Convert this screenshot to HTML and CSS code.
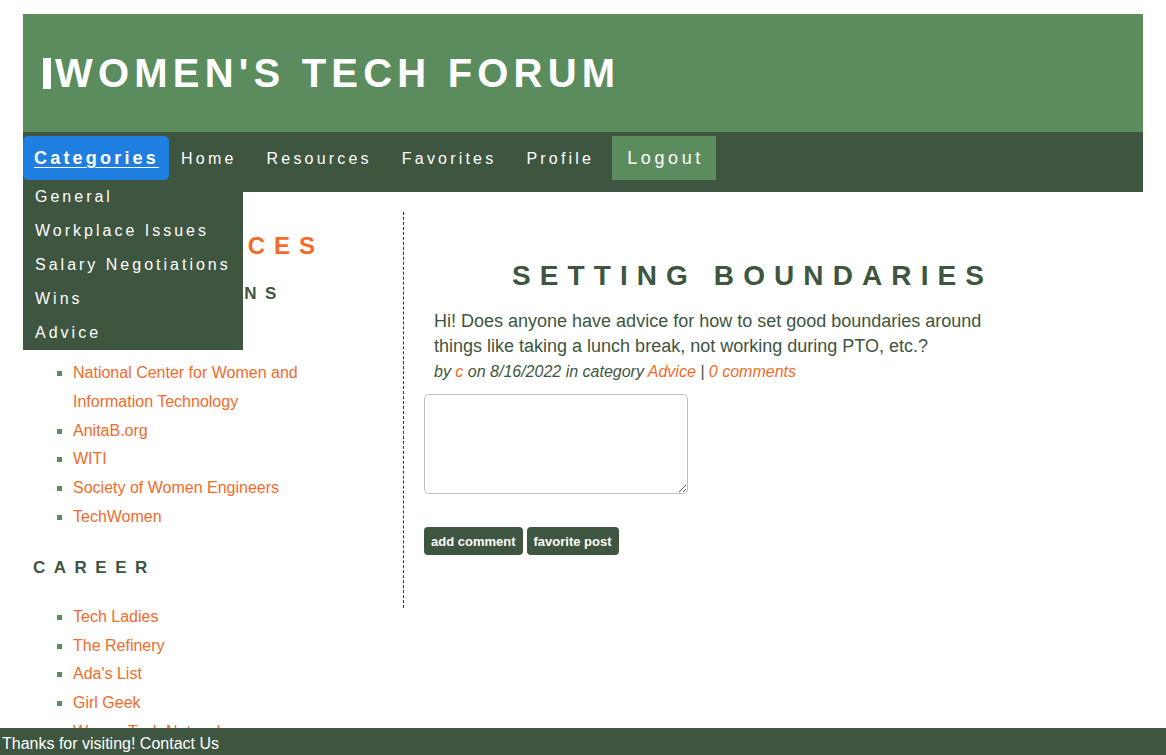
FILE: index.html
```html
<!DOCTYPE html>
<html lang="en">
<head>
<meta charset="utf-8">
<title>Women's Tech Forum</title>
<link rel="stylesheet" href="styles.css">
</head>
<body>
<div class="page">
  <header class="banner">
    <h1 class="site-title"><span class="caret"></span>WOMEN'S TECH FORUM</h1>
  </header>
  <nav class="nav">
    <div class="nav-item nav-dropdown">
      <a class="nav-link nav-link--active" href="#">Categories</a>
      <ul class="dropdown">
        <li><a href="#">General</a></li>
        <li><a href="#">Workplace Issues</a></li>
        <li><a href="#">Salary Negotiations</a></li>
        <li><a href="#">Wins</a></li>
        <li><a href="#">Advice</a></li>
      </ul>
    </div>
    <a class="nav-link nav-link--first" href="#">Home</a>
    <a class="nav-link" href="#">Resources</a>
    <a class="nav-link" href="#">Favorites</a>
    <a class="nav-link" href="#">Profile</a>
    <a class="nav-link nav-link--logout" href="#">Logout</a>
  </nav>
  <div class="content">
    <aside class="sidebar">
      <h2 class="side-title">RESOURCES</h2>
      <h3 class="side-sub">ORGANIZATIONS</h3>
      <ul class="links links--first">
        <li><a href="#">National Center for Women and Information Technology</a></li>
        <li><a href="#">AnitaB.org</a></li>
        <li><a href="#">WITI</a></li>
        <li><a href="#">Society of Women Engineers</a></li>
        <li><a href="#">TechWomen</a></li>
      </ul>
      <h3 class="side-sub">CAREER</h3>
      <ul class="links">
        <li><a href="#">Tech Ladies</a></li>
        <li><a href="#">The Refinery</a></li>
        <li><a href="#">Ada's List</a></li>
        <li><a href="#">Girl Geek</a></li>
        <li><a href="#">WomenTech Network</a></li>
      </ul>
    </aside>
    <main class="main">
      <h2 class="post-title">SETTING BOUNDARIES</h2>
      <p class="post-body">Hi! Does anyone have advice for how to set good boundaries around things like taking a lunch break, not working during PTO, etc.?</p>
      <p class="post-meta">by <a href="#">c</a> on 8/16/2022 in category <a href="#">Advice</a> | <a href="#">0 comments</a></p>
      <form class="comment-form">
        <textarea class="comment-box"></textarea>
        <div class="actions">
          <button type="button" class="btn">add comment</button>
          <button type="button" class="btn">favorite post</button>
        </div>
      </form>
    </main>
  </div>
</div>
<footer class="footer">Thanks for visiting! Contact Us</footer>
</body>
</html>
```
FILE: styles.css
```css
* { box-sizing: border-box; }
html, body { margin: 0; padding: 0; background: #fff; }
body {
  font-family: "Liberation Sans", Arial, sans-serif;
  color: #3e5540;
}
a { text-decoration: none; }

.page { margin: 14px 23px 0; }

.banner {
  background: #5b8c5d;
  height: 118px;
  display: flex;
  align-items: center;
  padding-left: 20px;
}
.site-title {
  margin: 0;
  display: flex;
  align-items: center;
  color: #fff;
  font-size: 40px;
  line-height: 40px;
  font-weight: bold;
  letter-spacing: 5.2px;
}
.caret {
  display: block;
  flex: 0 0 8px;
  width: 8px;
  height: 31px;
  background: #fff;
  margin-right: 4px;
}

.nav {
  background: #3e5540;
  height: 60px;
  display: flex;
  align-items: flex-start;
  padding-top: 4px;
  position: relative;
  z-index: 5;
}
.nav-item { position: relative; }
.nav-link {
  display: block;
  height: 44px;
  line-height: 45px;
  padding: 0 15px;
  color: #fff;
  font-size: 16px;
  letter-spacing: 3.2px;
}
.nav-link--first { padding-left: 12px; }
.nav-link--active {
  background: #1f7fe0;
  border-radius: 5px;
  font-size: 18px;
  font-weight: bold;
  text-decoration: underline;
  text-underline-offset: 3px;
  letter-spacing: 3.2px;
  padding: 0 10px 0 11px;
}
.nav-link--logout {
  background: #5b8c5d;
  font-size: 18px;
  letter-spacing: 3.6px;
  margin-left: 3px;
  padding: 0 12px 0 15px;
}
.dropdown {
  position: absolute;
  top: 44px;
  left: 0;
  width: 220px;
  margin: 0;
  padding: 0;
  list-style: none;
  background: #3e5540;
}
.dropdown a {
  display: block;
  height: 34px;
  line-height: 34px;
  padding-left: 12px;
  color: #fff;
  font-size: 16px;
  letter-spacing: 3px;
}

.content {
  display: flex;
  margin-top: 20px;
}
.sidebar {
  width: 380px;
  flex: none;
  padding: 0 40px 0 10px;
}
.side-title {
  margin: 20px 0 0;
  padding-left: 58px;
  color: #f26b2a;
  font-size: 24px;
  letter-spacing: 9px;
  font-weight: bold;
}
.side-sub {
  margin: 24px 0 0;
  font-size: 17px;
  letter-spacing: 8.5px;
  font-weight: bold;
  color: #3e5540;
}
.links {
  margin: 25px 0 26px;
  padding-left: 40px;
  list-style: square;
  font-size: 16px;
  line-height: 28.8px;
}
.links--first { margin-top: 55px; }
.links li::marker { color: #5b8c5d; }
.links a { color: #f26b2a; }

.main {
  flex: 1;
  border-left: 1px dashed #333;
  padding: 48px 60px 53px 20px;
  align-self: flex-start;
}
.post-title {
  margin: 0 0 17px;
  text-align: center;
  font-size: 28px;
  line-height: 32px;
  letter-spacing: 9.1px;
  color: #3e5540;
  padding-right: 2px;
}
.post-body {
  margin: 0 10px;
  max-width: 600px;
  font-size: 18px;
  line-height: 25px;
}
.post-meta {
  margin: 3px 10px 0;
  font-size: 16px;
  line-height: 20px;
  font-style: italic;
}
.post-meta a { color: #f26b2a; }
.comment-form { margin-top: 12px; }
.comment-box {
  display: block;
  width: 264px;
  height: 100px;
  border: 1px solid #bdbdbd;
  border-radius: 5px;
  resize: both;
}
.actions {
  display: flex;
  gap: 4px;
  margin-top: 33px;
}
.btn {
  height: 28px;
  padding: 0 7px;
  border: none;
  border-radius: 4px;
  background: #3e5540;
  color: #fff;
  font-family: "Liberation Sans", Arial, sans-serif;
  font-size: 13px;
  font-weight: bold;
}

.footer {
  position: fixed;
  left: 0;
  right: 0;
  bottom: 0;
  height: 27px;
  background: #3e5540;
  color: #fff;
  font-size: 16px;
  line-height: 23px;
  padding: 4px 0 0 2px;
  z-index: 10;
}
```
